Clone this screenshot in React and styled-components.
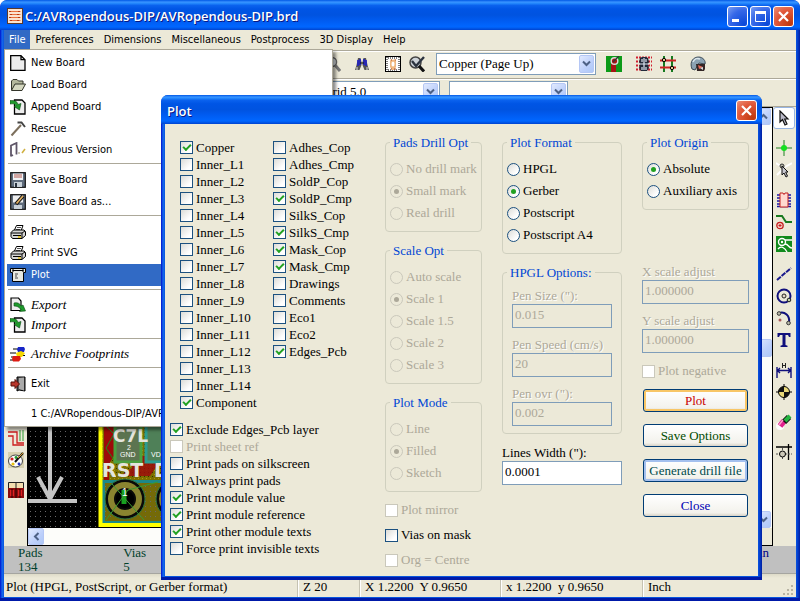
import React from "react";
import styled, { createGlobalStyle, css } from "styled-components";

const serif = '"Liberation Serif", "Times New Roman", serif';
const ui = '"DejaVu Sans Condensed", Tahoma, "DejaVu Sans", sans-serif';
const face = "#ece9d8";

const Global = createGlobalStyle`
  *, *::before, *::after { box-sizing: border-box; }
  body { margin: 0; background: #fff; font: 13px/16px ${serif}; color: #000; }
  button, input, select { font: inherit; color: inherit; margin: 0; }
`;

/* ---------- window frame ---------- */

const frame = css`
  display: flex;
  flex-direction: column;
  padding: 0 4px 4px;
  background: linear-gradient(90deg, #0019cf 0, #0831d9 1px, #166aee 2px, #0855dd 4px, #0855dd calc(100% - 4px), #0546d8 calc(100% - 3px), #001ea0 100%);
  border-radius: 7px 7px 0 0;
  box-shadow: inset 0 -3px 0 #0019a8;
`;

const MainWindow = styled.div`
  ${frame}
  position: relative;
  min-height: 100vh;
  overflow: hidden;
`;

const Dialog = styled.section`
  ${frame}
  position: absolute;
  left: 161px;
  right: 38px;
  top: 95px;
`;

const TitleBar = styled.header`
  display: flex;
  align-items: center;
  gap: 2px;
  height: ${(p) => (p.$small ? "29px" : "30px")};
  margin: 0 -4px;
  padding: 2px ${(p) => (p.$small ? "5px" : "6px")} 0 ${(p) => (p.$small ? "6px" : "7px")};
  border-radius: 7px 7px 0 0;
  background: linear-gradient(180deg, #0058e6 0, #3a93ff 7%, #288eff 10%, #0a62ee 18%, #0055e5 30%, #0053e0 50%, #005bf0 68%, #0066ff 88%, #0060f5 92%, #0043cf 100%);
`;

const Title = styled.h1`
  flex: 1;
  margin: 0;
  font: 600 13px/18px "Open Sans", "Noto Sans", sans-serif;
  color: #fff;
  text-shadow: 1px 1px 0 #0a1883;
  white-space: nowrap;
`;

const WinButton = styled.button`
  display: grid;
  place-items: center;
  width: 21px;
  height: 21px;
  padding: 0;
  border: 1px solid #fff;
  border-radius: 3px;
  background: ${(p) =>
    p.$close
      ? "radial-gradient(circle at 85% 90%, #c0380d, #e1583a 60%, #ec9078)"
      : "radial-gradient(circle at 85% 90%, #0a48d8, #3668e8 60%, #7c9ff2)"};
`;

const CloseGlyph = () => (
  <svg width="13" height="13" viewBox="0 0 13 13" aria-hidden="true">
    <path d="M2 2l9 9M11 2l-9 9" stroke="#fff" strokeWidth="2.2" />
  </svg>
);

/* ---------- menu bar and menu ---------- */

const MenuBar = styled.nav`
  display: flex;
  height: 20px;
  background: ${face};
  font: 11px/14px ${ui};
`;

const MenuTitle = styled.button`
  padding: 0 5px;
  border: 0;
  background: ${(p) => (p.$open ? "#316ac5" : "transparent")};
  color: ${(p) => (p.$open ? "#fff" : "#000")};
`;

const Menu = styled.div`
  position: absolute;
  left: 4px;
  top: 49px;
  width: 329px;
  padding: 2px;
  border: 1px solid #aca899;
  background: #fff;
  box-shadow: 3px 3px 3px rgba(0, 0, 0, 0.45);
  font: 11px/14px ${ui};
`;

const MenuItem = styled.button`
  display: flex;
  align-items: center;
  gap: 5px;
  width: 100%;
  height: ${(p) => p.$h || 22}px;
  padding: 0 3px;
  border: 0;
  text-align: left;
  background: ${(p) => (p.$active ? "#316ac5" : "transparent")};
  color: ${(p) => (p.$active ? "#fff" : "#000")};
  ${(p) => p.$italic && css`font: italic 13px/16px ${serif};`}
`;

const IconSlot = styled.span`
  display: flex;
  flex: none;
  width: 16px;
  height: 16px;
`;

const MenuRule = styled.hr`
  height: 1px;
  margin: 3px 1px 5px;
  border: 0;
  background: #aca899;
`;

/* ---------- toolbars ---------- */

const Toolbar = styled.div`
  display: flex;
  align-items: center;
  height: 28px;
  padding: 0 0 2px ${(p) => p.$start}px;
  gap: 9px;
  background: ${face};
  border-top: 1px solid #aca899;
  box-shadow: inset 0 1px 0 #fff;
`;

const ToolGroup = styled.div`
  display: flex;
  align-items: center;
  gap: 8px;
  margin-right: ${(p) => p.$after || 0}px;
`;

const SelectWrap = styled.div`
  position: relative;
  width: ${(p) => p.$w}px;
  height: 22px;
  border: 1px solid #7f9db9;
  background: #fff;
  select {
    width: 100%;
    height: 100%;
    padding: 0 20px 0 2px;
    border: 0;
    appearance: none;
    background: transparent;
  }
`;

const arrowFace = css`
  display: grid;
  place-items: center;
  border: 1px solid #b5c7f5;
  border-radius: 2px;
  background: linear-gradient(135deg, #e1eafe, #bdd0fb 60%, #aec8f7);
`;

const SelectArrow = styled.span`
  ${arrowFace}
  position: absolute;
  top: 1px;
  right: 1px;
  bottom: 1px;
  width: 15px;
  pointer-events: none;
`;

const turns = { down: 0, left: 90, up: 180 };
const Chevron = ({ dir = "down" }) => (
  <svg width="9" height="9" viewBox="0 0 9 9" aria-hidden="true">
    <path d="M1 2.5L4.500 6L8 2.500" fill="none" stroke="#4d6185" strokeWidth="2" transform={`rotate(${turns[dir]} 4.5 4.5)`} />
  </svg>
);

const Combo = ({ label, value, w }) => (
  <SelectWrap $w={w}>
    <select aria-label={label} defaultValue={value}>
      <option>{value}</option>
    </select>
    <SelectArrow><Chevron /></SelectArrow>
  </SelectWrap>
);

/* ---------- work area ---------- */

const WorkArea = styled.div`
  display: flex;
  flex: 1;
  background: ${face};
  border-top: 1px solid #aca899;
`;

const LeftTools = styled.div`
  display: flex;
  flex-direction: column;
  justify-content: flex-end;
  align-items: center;
  gap: 6px;
  width: 23px;
  padding-bottom: 49px;
`;

const RightTools = styled.div`
  display: flex;
  flex-direction: column;
  width: 23px;
`;

const IconButton = styled.button`
  display: grid;
  place-items: center;
  width: ${(p) => p.$w || 22}px;
  height: ${(p) => p.$h || 22}px;
  margin-top: ${(p) => (p.$gap ? 8 : 0)}px;
  padding: 0;
  border: 1px solid ${(p) => (p.$on ? "#98b5e2" : "transparent")};
  border-radius: 3px;
  background: ${(p) => (p.$on ? "#fff" : "transparent")};
`;

const Board = styled.main`
  display: grid;
  grid-template: minmax(0, 1fr) 17px / minmax(0, 1fr) 17px;
  flex: 1;
  border: 1px solid #000;
  background: ${face};
`;

const Canvas = styled.div`
  display: flex;
  align-items: flex-end;
  overflow: hidden;
  background: #000;
`;

const ScrollTrack = styled.div`
  display: flex;
  flex-direction: ${(p) => (p.$vertical ? "column" : "row")};
  justify-content: space-between;
  background: #fdfdfa;
`;

const ScrollButton = styled.button`
  ${arrowFace}
  width: 16px;
  height: 17px;
  padding: 0;
`;

const ScrollThumb = styled.div`
  ${arrowFace}
  height: 18px;
  margin-top: 60px;
`;

const InfoPanel = styled.dl`
  display: grid;
  grid-template-columns: 105fr 500fr 145fr 27fr;
  margin: 0;
  height: 28px;
  padding-left: 14px;
  background: #c0c0c0;
  color: #00402c;
  border-bottom: 1px solid #a5a5a0;
  line-height: 14px;
  dt, dd { margin: 0; }
`;

const InfoCell = styled.div`
  text-align: ${(p) => (p.$end ? "right" : "left")};
  color: ${(p) => (p.$end ? "#000084" : "inherit")};
`;

const StatusBar = styled.footer`
  display: grid;
  grid-template-columns: 293fr 62fr 141fr 142fr 154fr;
  height: 23px;
  background: linear-gradient(180deg, #dedbc8, ${face} 4px, ${face});
`;

const StatusCell = styled.span`
  display: flex;
  align-items: center;
  justify-content: space-between;
  padding: 2px 0 0 ${(p) => (p.$first ? 2 : 5)}px;
  border-left: ${(p) => (p.$first ? 0 : 1)}px solid #c5c2b2;
  box-shadow: ${(p) => (p.$first ? "none" : "inset 1px 0 0 #fff")};
  white-space: pre;
`;

const Grip = styled.svg`
  align-self: flex-end;
`;

/* ---------- dialog parts ---------- */

const DialogBody = styled.form`
  display: grid;
  grid-template-columns: minmax(0, 195fr) minmax(0, 97fr) minmax(0, 120fr) minmax(0, 107fr);
  column-gap: 20px;
  padding: 11px 9px 9px 5px;
  background: ${face};
`;

const Stack = styled.div`
  display: flex;
  flex-direction: column;
  gap: ${(p) => p.$gap || 11}px;
`;

const LayerColumns = styled.div`
  display: grid;
  grid-template-columns: 93fr 92fr;
  align-content: start;
  padding: 4px 0 0 10px;
`;

const Choice = styled.label`
  display: flex;
  align-items: center;
  gap: 3px;
  height: ${(p) => p.$h}px;
  white-space: nowrap;
  color: ${(p) => (p.$off ? "#aca899" : "#000")};
`;

const Tick = styled.input`
  flex: none;
  display: grid;
  place-items: center;
  appearance: none;
  width: 13px;
  height: 13px;
  border: 1px solid #1c5180;
  background: linear-gradient(135deg, #dcdcd7, #fff 75%);
  &:checked::after {
    content: "";
    width: 8px;
    height: 5px;
    margin-top: -2px;
    border: solid #21a121;
    border-width: 0 0 2px 2px;
    transform: rotate(-45deg);
  }
  &:disabled { border-color: #cac8bb; background: #fff; }
`;

const Dot = styled.input`
  flex: none;
  display: grid;
  place-items: center;
  appearance: none;
  width: 13px;
  height: 13px;
  border: 1px solid #1c5180;
  border-radius: 50%;
  background: linear-gradient(135deg, #dcdcd7, #fff 75%);
  &:checked::after {
    content: "";
    width: 5px;
    height: 5px;
    border-radius: 50%;
    background: #21a121;
  }
  &:disabled { border-color: #cac8bb; background: ${face}; }
  &:disabled:checked::after { background: #aca899; }
`;

const Group = styled.fieldset`
  min-width: 0;
  margin: 0;
  padding: 8px ${(p) => p.$side || 4}px 7px;
  border: 1px solid #d0d0bf;
  border-radius: 4px;
  legend {
    height: 15px;
    margin-left: ${(p) => (p.$side ? -5 : 0)}px;
    padding: 0 3px;
    line-height: 15px;
    color: #0046d5;
    white-space: nowrap;
  }
`;

const Fields = styled.div`
  display: flex;
  flex-direction: column;
  gap: 9px;
  margin-top: ${(p) => p.$before || 0}px;
`;

const Field = styled.label`
  display: block;
  white-space: nowrap;
  color: ${(p) => (p.$off ? "#aca899" : "#000")};
  text-shadow: ${(p) => (p.$off ? "1px 1px 0 #fff" : "none")};
  input {
    display: block;
    width: 100%;
    height: 24px;
    padding: 0 2px 2px;
    border: 1px solid #7f9db9;
    background: #fff;
  }
  input:disabled { background: ${face}; color: #aca899; }
`;

const edges = { plain: "transparent", hot: "#f8c666", focus: "#a4c0ee" };
const PushButton = styled.button`
  height: 23px;
  padding: 0;
  border: 1px solid #003c74;
  border-radius: 3px;
  background: linear-gradient(180deg, #fff, #f3f2ec 85%, #d8d2c6);
  box-shadow: inset 0 0 0 2px ${(p) => edges[p.$edge || "plain"]};
  color: ${(p) => p.$ink};
  white-space: nowrap;
`;

const Buttons = styled.div`
  display: flex;
  flex-direction: column;
  gap: 12px;
  padding: 0 1px;
`;

/* ---------- icons ---------- */

const art = {
  app: (
    <>
      <rect x=".5" y=".5" width="15" height="15" fill="#fbe3cf" stroke="#5a3a2a" />
      <path d="M2.500 3.500h11M2.500 6.500h11M2.500 9.500h11M2.500 12.500h11" stroke="#e8703c" />
      <path d="M3 3v1M12 3v1M4 6v1M11 6v1M3 9v1M12 9v1M4 12v1M11 12v1" stroke="#b83a10" strokeWidth="2" />
    </>
  ),
  page: (
    <path d="M.7.7H11l4 4v10.600H.7zM11 .7v4h4" fill="#ededed" stroke="#000" strokeWidth="1.300" />
  ),
  folder: (
    <>
      <path d="M1.500 13V4l1.500-1.500h4L8.500 4H13v3" fill="#b4b89c" stroke="#33352a" />
      <path d="M1.500 13.500L5 7h10.500L12 13.500z" fill="#d5d8c0" stroke="#33352a" />
    </>
  ),
  append: (
    <>
      <path d="M4.500 1H12l3 3v11H4.500z" fill="#eee" stroke="#000" strokeWidth="1.300" />
      <path d="M0 1.500c4 0 7 0 8 4l3-1-1.500 6.500L4 7.500l2-1C4 4 2 5 0 5z" fill="#1e9a2c" stroke="#0a4a12" strokeWidth=".6" />
    </>
  ),
  hammer: (
    <>
      <path d="M1.500 14.500L11 4" stroke="#7c6f5c" strokeWidth="2" />
      <path d="M7.500 1.500l4 0L15 6" fill="none" stroke="#444" strokeWidth="2" />
    </>
  ),
  previous: (
    <>
      <path d="M1 14.500V3.500L6.500 1v11.500M1 14l2-1" fill="none" stroke="#5f5668" strokeWidth="1.800" />
      <path d="M12 11l3-4" stroke="#d0b040" strokeWidth="1.500" />
      <path d="M9 10v2" stroke="#9a9070" />
    </>
  ),
  save: (
    <>
      <rect x=".7" y=".7" width="14.600" height="14.600" fill="#5f6c7c" stroke="#111" strokeWidth="1.200" />
      <rect x="3" y="1.500" width="10" height="6.500" fill="#f2f4f6" />
      <path d="M4 3h8M4 5h8" stroke="#b35a50" />
      <rect x="4" y="10" width="8" height="5" fill="#c9d1d8" />
      <rect x="5" y="11" width="2" height="4" fill="#28323e" />
    </>
  ),
  saveAs: (
    <>
      <rect x=".7" y=".7" width="14.600" height="14.600" fill="#5f6c7c" stroke="#111" strokeWidth="1.200" />
      <rect x="3" y="1.500" width="10" height="7" fill="#eee" />
      <rect x="4" y="11" width="8" height="4" fill="#c9d1d8" />
      <path d="M6 10l7-8" stroke="#111" strokeWidth="3.500" />
      <path d="M6.500 9.500L13 2" stroke="#e2b264" strokeWidth="1.800" />
    </>
  ),
  printer: (
    <>
      <path d="M4 7l2.500-5.500H13L11 7" fill="#fff" stroke="#000" />
      <path d="M7 3.500h4M6 5.500h4" stroke="#555" />
      <path d="M1 8.500L3.500 6H14l1.500 1.500v4L12 14.500H2.500L1 12.500z" fill="#d6d6d6" stroke="#000" />
      <path d="M1 9h11l3-2M3 11.500h8M12 9v5" stroke="#000" fill="none" />
      <path d="M8 13h3" stroke="#e8c000" strokeWidth="1.300" />
    </>
  ),
  plotter: (
    <>
      <path d="M.5 1.500h15v4h-2v9h-11v-9h-2z" fill="#e8e8e0" stroke="#000" />
      <path d="M2.500 3.500h11M3 1v4M13 1v4" stroke="#000" />
      <path d="M5 7h3M5 9h2M5 11h3" stroke="#444" />
    </>
  ),
  exportDoc: (
    <>
      <path d="M1 1h7.500l2.500 3v9.500H1z" fill="#eee" stroke="#000" strokeWidth="1.200" />
      <path d="M4 6c4-1 6 1 7 3l2-1 2.500 6-6 .5 1.500-2C9 10 7 9 4 9z" fill="#1e9a2c" stroke="#0a4a12" strokeWidth=".6" />
    </>
  ),
  archive: (
    <>
      <path d="M3 3h5M0 7h6M1 11h4M8 9.500h7M0 14h4" stroke="#000" />
      <path d="M8 1h6l1 2-1 3H8L7 3.500z" fill="#1726c8" />
      <path d="M6 7l5-2 4 2-3 4H7z" fill="#f5d800" />
      <path d="M3 10h7l1 3-2 2.500H3L2 13z" fill="#dd1c12" />
    </>
  ),
  exit: (
    <>
      <path d="M7 1h8v14l-6-1-2 1z" fill="#555" stroke="#000" />
      <path d="M9 2l5-.5v13L9 13z" fill="#a9a9a9" />
      <path d="M1 6h4V3.500L9.500 8 5 12.500V10H1z" fill="#b8352a" stroke="#571009" />
    </>
  ),
  zoom: (
    <>
      <circle cx="7" cy="6" r="4.500" fill="#dfe6ea" stroke="#666" strokeWidth="1.500" />
      <path d="M10 9l5 6" stroke="#777" strokeWidth="3" />
    </>
  ),
  binoculars: (
    <>
      <path d="M4 2h2.500l1 4v3L5.500 14H1l1.500-5zM9.500 2H12l1.500 7 1.500 5h-4.500l-2-5V6z" fill="#555" />
      <path d="M4 4v6M12 4v6M6 3v6M10 3v6" stroke="#1a1ad0" strokeWidth="1.500" />
      <path d="M3 11v3M13 11v3" stroke="#ddd" />
      <path d="M6 7h4" stroke="#111" />
    </>
  ),
  netlist: (
    <>
      <rect x=".5" y=".5" width="15" height="15" fill="#fff" stroke="#000" />
      <path d="M2 1v14M14 1v14M3 2h10M3 14h10" stroke="#000" strokeDasharray="1 1" />
      <path d="M5 5l1-2 2 1 2-1 1 2v6l-2 3H7l-2-3z" fill="#efb880" />
      <ellipse cx="8" cy="8" rx="1.500" ry="2.500" fill="#fff" /><path d="M6 13h1M9 13h2M6 4h1M10 4h1" stroke="#b04a20" />
    </>
  ),
  drc: (
    <>
      <circle cx="6.500" cy="6.500" r="5.500" fill="#cdd3d8" stroke="#444" strokeWidth="1.500" />
      <path d="M3 5l4 5 8-9" fill="none" stroke="#2c3440" strokeWidth="2.400" />
      <path d="M10 10l5 5.500" stroke="#111" strokeWidth="3" />
    </>
  ),
  route: (
    <>
      <rect width="16" height="16" fill="#0c9a18" />
      <path d="M5 16V7h5v9z" fill="#a51414" />
      <circle cx="8.500" cy="5" r="4" fill="#ddd" /><circle cx="8.500" cy="5" r="2.600" fill="#a51414" />
      <path d="M7 6l6-6" stroke="#333" strokeWidth="1.200" />
    </>
  ),
  module: (
    <>
      <path d="M0 1.500h16M0 5.500h16M0 9.500h16M0 13.500h16" stroke="#d02030" strokeWidth="2" strokeDasharray="2 1" />
      <path d="M4 2l2-1h4l2 1 1 4-1 2 1 4-2 3H5l-2-3 1-4-1-2z" fill="#222a3a" />
      <path d="M8 2v12M3 8h10M6 3v3M10 3v3M6 11v3M10 11v3" stroke="#dfe6f4" strokeWidth="1.200" />
    </>
  ),
  tracks: (
    <>
      <path d="M4 0v16M12 0v16" stroke="#177a20" strokeWidth="2" />
      <path d="M0 4.500h16M0 11.500h16" stroke="#cc2222" strokeWidth="2" />
      <circle cx="4" cy="4" r="1.700" fill="#e8c890" stroke="#000" /><circle cx="12" cy="12" r="1.700" fill="#e8c890" stroke="#000" />
    </>
  ),
  helmet: (
    <>
      <path d="M2 13C-1 5 4 1 8.500 1S16 5 15 8L9 7 5 14z" fill="#8ba2b2" stroke="#3c4a56" />
      <path d="M6 8l9 0v5l-1 2H7z" fill="#332626" /><path d="M8 9l5 2-4 2z" fill="#e86a5a" />
      <path d="M10 12l3-1v3z" fill="#ddd" />
      <path d="M3 6c2-4 4-4 7-3" fill="none" stroke="#dbe6ec" strokeWidth="1.500" />
    </>
  ),
  arrow: (
    <path d="M4 1v11l2.500-2.500L9 15l2-1-2.300-5H12z" fill="#b9b9c8" stroke="#111" strokeWidth="1.200" />
  ),
  cross: (
    <>
      <path d="M8 0v16M0 8h16" stroke="#208020" />
      <circle cx="8" cy="8" r="3" fill="#14e020" />
    </>
  ),
  pick: (
    <>
      <path d="M0 1l6 4M16 1L9 5M1 13l5-5" stroke="#fff" strokeWidth="2" />
      <circle cx="6" cy="4" r="2" fill="#b8b8a8" stroke="#333" />
      <path d="M6 4v9l2-2 2 4 1.500-.8L9.700 10H12z" fill="#c8c8d0" stroke="#111" />
    </>
  ),
  chip: (
    <>
      <path d="M1 3h14M1 6h14M1 9h14M1 12h14M1 14.500h14" stroke="#1a1aa8" strokeWidth="1.500" />
      <path d="M4 1h3l1 1.500L9 1h3v14H4z" fill="#ffd9d0" stroke="#c42020" />
    </>
  ),
  addTrack: (
    <>
      <path d="M0 2h6l4 6h6" fill="none" stroke="#187a20" strokeWidth="2" />
      <circle cx="4" cy="11.500" r="3.200" fill="#f4c9c0" stroke="#c42020" strokeWidth="1.300" /><path d="M4 10v3M2.500 11.500h3" stroke="#c42020" />
    </>
  ),
  zone: (
    <>
      <rect width="16" height="16" fill="#118a1c" />
      <circle cx="6" cy="6" r="3.500" fill="none" stroke="#fff" strokeWidth="1.400" /><circle cx="6" cy="6" r="1.200" fill="#fff" />
      <path d="M9 4h7M9 8c4 0 3 4 7 4M2 13c3-4 7-1 9 3" fill="none" stroke="#fff" strokeWidth="1.300" />
    </>
  ),
  line: <path d="M1 14L15 2" stroke="#1a1a8c" strokeWidth="2" strokeDasharray="5 1" />,
  circle: (
    <>
      <circle cx="8" cy="8" r="6.500" fill="none" stroke="#10107c" strokeWidth="2" />
      <circle cx="8" cy="8" r="2" fill="#e6d8c8" stroke="#222" /><circle cx="13" cy="12" r="1.800" fill="#bca" stroke="#222" />
    </>
  ),
  arc: (
    <>
      <path d="M3 3c6-2 11 3 10 9" fill="none" stroke="#10107c" strokeWidth="2" />
      <circle cx="3" cy="3.500" r="1.800" fill="#bba" stroke="#333" /><circle cx="4" cy="10" r="1.500" fill="#a55" /><circle cx="12.500" cy="13" r="1.800" fill="#bba" stroke="#333" />
    </>
  ),
  letter: <path d="M1.500 1h13v4h-1.500L12 3H9.500v10l2 .8V15h-7v-1.200l2-.8V3H4L3 5H1.500z" fill="#10107c" />,
  dimension: (
    <>
      <path d="M1 5v11M15 5v11M1 8.500h14M4 6L1.500 8.500 4 11M12 6l2.500 2.500L12 11" fill="none" stroke="#10107c" strokeWidth="1.400" />
      <path d="M6.500 1v5M9.500 1v5M6 3.500h4" stroke="#222" />
    </>
  ),
  target: (
    <>
      <path d="M8 0v16M0 8h16" stroke="#000" />
      <circle cx="8" cy="8" r="5.500" fill="#e9d878" stroke="#000" />
      <path d="M8 8V2.500A5.500 5.500 0 0 0 2.500 8zM8 8v5.500A5.500 5.500 0 0 0 13.500 8z" fill="#111" />
    </>
  ),
  eraser: (
    <>
      <circle cx="4" cy="12" r="4" fill="#fff" />
      <path d="M4 12l4-5" stroke="#e0208c" strokeWidth="6" />
      <path d="M8 8l5-5" stroke="#111" strokeWidth="6" /><path d="M9 7l5-5" stroke="#25b440" strokeWidth="4" />
      <path d="M3 11l4-5" stroke="#f8a0cc" strokeWidth="1.500" />
    </>
  ),
  offset: (
    <>
      <path d="M0 3h16M12.500 0v16" stroke="#000" strokeWidth="1.300" />
      <path d="M0 10h16M6.500 4v12" stroke="#555" strokeDasharray="2 1" />
      <circle cx="6.500" cy="10" r="3" fill="#ccc8b8" stroke="#000" />
    </>
  ),
  nets: (
    <>
      <path d="M0 2h9v11h7M0 6h5v9h11" fill="none" stroke="#cc1c1c" strokeWidth="1.300" />
      <path d="M12 0v11M15 0v11" stroke="#2a9a30" />
    </>
  ),
  palette: (
    <>
      <rect width="16" height="16" fill="#d8d2b0" />
      <ellipse cx="7.500" cy="9" rx="7" ry="6" fill="#fff" stroke="#444" />
      <circle cx="4" cy="7" r="1.600" fill="#d02020" /><circle cx="5" cy="12" r="1.600" fill="#e8c010" /><circle cx="8" cy="5.500" r="1.400" fill="#20a030" /><circle cx="11" cy="12" r="1.400" fill="#2030c0" />
      <path d="M7 10l8-9" stroke="#111" strokeWidth="2" /><path d="M10 6l5-5" stroke="#e0a030" />
    </>
  ),
  contrast: (
    <>
      <path d="M.5 7V.5h15V7M8 0v7" fill="#f4dfb0" stroke="#222" />
      <rect y="6" width="16" height="10" fill="#8c0c0c" />
      <path d="M2 8h4v6H2zM10 8h4v6h-4z" fill="#e02020" /><path d="M4 7v9M12 7v9M8 6v10" stroke="#200" />
    </>
  ),
};

const Icon = ({ name }) => (
  <svg width="16" height="16" viewBox="0 0 16 16" fill="none" aria-hidden="true">{art[name]}</svg>
);

const BoardArt = () => (
  <svg width="134" height="104" viewBox="0 0 134 104" role="img" aria-label="Board layout">
    <defs>
      <pattern id="grid" width="5" height="5" patternUnits="userSpaceOnUse">
        <rect x="2" y="2" width="1" height="1" fill="#6a6a6a" />
      </pattern>
      <pattern id="hatch" width="4" height="4" patternUnits="userSpaceOnUse">
        <rect width="4" height="4" fill="#7c7000" />
        <rect width="1" height="1" fill="#2c3a00" /><rect x="2" y="2" width="1" height="1" fill="#a89a10" />
      </pattern>
    </defs>
    <rect width="134" height="104" fill="#000" />
    <rect width="134" height="104" fill="url(#grid)" />
    <g stroke="#c4c4c4" strokeWidth="4" fill="none">
      <path d="M22 0v76M10 53l12 22 12-22M0 77h49" />
    </g>
    <rect x="72" y="-10" width="90" height="111" fill="url(#hatch)" />
    <path d="M78 0h9v30l-6 10v16h-5V0z" fill="#9c0a0a" />
    <path d="M92 52h30l8-12v-8h-26v12z" fill="#9c0a0a" opacity=".85" />
    <path d="M76 0l10 10-8 14 8 12" stroke="#1c8a1c" fill="none" />
    <rect x="87" y="-8" width="26" height="46" fill="#5c7450" stroke="#4aa040" strokeWidth="3" />
    <rect x="118" y="-8" width="26" height="46" fill="#4f8058" stroke="#2c9c90" strokeWidth="3" />
    <rect x="75.500" y="57.500" width="62" height="41" fill="#746a08" stroke="#1c8888" strokeWidth="3" />
    <rect x="77" y="60" width="60" height="37" fill="url(#grid)" />
    {[97, 148].map((cx) => (
      <g key={cx}>
        <circle cx={cx} cy="75" r="20" fill="#0a0a08" stroke="#2f7a44" />
        <circle cx={cx} cy="75" r="14" fill="none" stroke="#8a8430" strokeWidth="6" />
        <circle cx={cx} cy="75" r="9" fill="#000" />
        <path d={`M${cx - 1} 66v14`} stroke="#18a020" strokeWidth="5" />
      </g>
    ))}
    <path d="M78 96l22-30 30-8M84 60l32 36" stroke="#3a9a30" fill="none" />
    <path d="M72.500 0v101H134" fill="none" stroke="#ffff00" strokeWidth="4" />
    <g fill="#e4e4dc" fontFamily='"DejaVu Sans", sans-serif' fontWeight="bold">
      <text x="85" y="18" fontSize="17">C7L</text>
      <text x="74" y="53" fontSize="19">RST</text>
      <text x="126" y="53" fontSize="19">D</text>
    </g>
    <g fill="#fff" fontFamily='"Liberation Sans", sans-serif'>
      <text x="99" y="26" fontSize="7">2</text>
      <text x="92" y="33" fontSize="7">GND</text>
      <text x="123" y="33" fontSize="7">VD</text>
      <text x="94" y="72" fontSize="10">1</text>
    </g>
  </svg>
);

/* ---------- data ---------- */

const menuItems = [
  ["New Board", "page"], ["Load Board", "folder"], ["Append Board", "append"],
  ["Rescue", "hammer", 21], ["Previous Version", "previous", 21], null,
  ["Save Board", "save"], ["Save Board as...", "saveAs", 21], null,
  ["Print", "printer", 21], ["Print SVG", "printer"], ["Plot", "plotter"], null,
  ["Export", "exportDoc", 20, true], ["Import", "append", 20, true], null,
  ["Archive Footprints", "archive", 20, true], null,
  ["Exit", "exit"], null,
  ["1 C:/AVRopendous-DIP/AVRopendous-DIP.brd", null, 20],
];

const copperLayers = ["Copper", ...Array.from({ length: 14 }, (_, i) => `Inner_L${i + 1}`), "Component"];
const techLayers = ["Adhes_Cop", "Adhes_Cmp", "SoldP_Cop", "SoldP_Cmp", "SilkS_Cop", "SilkS_Cmp", "Mask_Cop", "Mask_Cmp", "Drawings", "Comments", "Eco1", "Eco2", "Edges_Pcb"];
const selected = new Set(["Copper", "Component", "SoldP_Cmp", "SilkS_Cmp", "Mask_Cop", "Mask_Cmp", "Edges_Pcb"]);

const options = [
  ["Exclude Edges_Pcb layer", true], ["Print sheet ref", false, true], ["Print pads on silkscreen"],
  ["Always print pads"], ["Print module value", true], ["Print module reference", true],
  ["Print other module texts", true], ["Force print invisible texts"],
];

const rightTools = [
  ["Select", "arrow"], ["Highlight net", "cross", 1], ["Local ratsnest", "pick"], ["Add module", "chip", 1],
  ["Add track", "addTrack"], ["Add zone", "zone"], ["Add line", "line", 1], ["Add circle", "circle"],
  ["Add arc", "arc"], ["Add text", "letter"], ["Add dimension", "dimension", 1], ["Add target", "target"],
  ["Delete", "eraser", 1], ["Offset", "offset", 1],
];

const Check = ({ label, on, off, h = 17 }) => (
  <Choice $h={h} $off={off}>
    <Tick type="checkbox" defaultChecked={on} disabled={off} />
    {label}
  </Choice>
);

const RadioGroup = ({ title, items, value, off }) => (
  <Group>
    <legend>{title}</legend>
    {items.map((item) => (
      <Choice key={item} $h={22} $off={off}>
        <Dot type="radio" name={title} defaultChecked={item === value} disabled={off} />
        {item}
      </Choice>
    ))}
  </Group>
);

const TextField = ({ label, value, off }) => (
  <Field $off={off}>
    {label}
    <input type="text" defaultValue={value} disabled={off} />
  </Field>
);

const Tool = ({ label, icon }) => (
  <IconButton type="button" aria-label={label} $w={16}><Icon name={icon} /></IconButton>
);

export default function App() {
  return (
    <>
      <Global />
      <MainWindow>
        <TitleBar>
          <Icon name="app" />
          <Title>C:/AVRopendous-DIP/AVRopendous-DIP.brd</Title>
          <WinButton type="button" aria-label="Minimize">
            <svg width="13" height="13" viewBox="0 0 13 13"><path d="M1 10.500h7" stroke="#fff" strokeWidth="3" /></svg>
          </WinButton>
          <WinButton type="button" aria-label="Maximize">
            <svg width="13" height="13" viewBox="0 0 13 13"><path d="M1.500 2v9.500h10V2M1 2.500h11" fill="none" stroke="#fff" /><path d="M1 2.500h11" stroke="#fff" strokeWidth="3" /></svg>
          </WinButton>
          <WinButton type="button" aria-label="Close window" $close><CloseGlyph /></WinButton>
        </TitleBar>

        <MenuBar>
          {["File", "Preferences", "Dimensions", "Miscellaneous", "Postprocess", "3D Display", "Help"].map((name) => (
            <MenuTitle key={name} type="button" $open={name === "File"}>{name}</MenuTitle>
          ))}
        </MenuBar>

        <Toolbar $start={320}>
          <ToolGroup $after={4}><Tool label="Zoom" icon="zoom" /></ToolGroup>
          <ToolGroup $after={6}><Tool label="Find" icon="binoculars" /></ToolGroup>
          <ToolGroup $after={3}>
            <Tool label="Read netlist" icon="netlist" />
            <Tool label="Design rules check" icon="drc" />
          </ToolGroup>
          <Combo label="Active layer" value="Copper (Page Up)" w={160} />
          <ToolGroup $after={5}><Tool label="Track mode" icon="route" /></ToolGroup>
          <ToolGroup $after={5}>
            <Tool label="Module mode" icon="module" />
            <Tool label="Autoroute" icon="tracks" />
          </ToolGroup>
          <Tool label="Web router" icon="helmet" />
        </Toolbar>
        <Toolbar $start={316}>
          <Combo label="Grid" value="Grid 5.0" w={120} />
          <Combo label="Zoom level" value="" w={119} />
        </Toolbar>

        <WorkArea>
          <LeftTools>
            <IconButton type="button" aria-label="Show ratsnest" $h={16}><Icon name="nets" /></IconButton>
            <IconButton type="button" aria-label="Colours" $h={16}><Icon name="palette" /></IconButton>
            <IconButton type="button" aria-label="High contrast" $h={16} $gap><Icon name="contrast" /></IconButton>
          </LeftTools>
          <Board>
            <Canvas><BoardArt /></Canvas>
            <ScrollTrack $vertical>
              <ScrollButton type="button" aria-label="Scroll up"><Chevron dir="up" /></ScrollButton>
              <ScrollThumb />
              <ScrollButton type="button" aria-label="Scroll down"><Chevron /></ScrollButton>
            </ScrollTrack>
            <ScrollTrack>
              <ScrollButton type="button" aria-label="Scroll left"><Chevron dir="left" /></ScrollButton>
            </ScrollTrack>
          </Board>
          <RightTools>
            {rightTools.map(([label, icon, gap]) => (
              <IconButton key={label} type="button" aria-label={label} $gap={gap} $on={icon === "arrow"}>
                <Icon name={icon} />
              </IconButton>
            ))}
          </RightTools>
        </WorkArea>

        <InfoPanel>
          <InfoCell><dt>Pads</dt><dd>134</dd></InfoCell>
          <InfoCell><dt>Vias</dt><dd>5</dd></InfoCell>
          <InfoCell $end><dt>NoConn</dt></InfoCell>
        </InfoPanel>
        <StatusBar>
          <StatusCell $first>Plot (HPGL, PostScript, or Gerber format)</StatusCell>
          <StatusCell>Z 20</StatusCell>
          <StatusCell>{"X 1.2200  Y 0.9650"}</StatusCell>
          <StatusCell>{"x 1.2200  y 0.9650"}</StatusCell>
          <StatusCell>
            Inch
            <Grip width="13" height="13" viewBox="0 0 13 13" aria-hidden="true">
              <path d="M8 1h2v2H8zM8 5h2v2H8zM4 5h2v2H4zM8 9h2v2H8zM4 9h2v2H4zM0 9h2v2H0z" fill="#b8b4a3" />
            </Grip>
          </StatusCell>
        </StatusBar>

        <Menu role="menu">
          {menuItems.map((item, i) =>
            item ? (
              <MenuItem key={i} type="button" role="menuitem" $h={item[2]} $italic={item[3]} $active={item[0] === "Plot"}>
                <IconSlot>{item[1] && <Icon name={item[1]} />}</IconSlot>
                {item[0]}
              </MenuItem>
            ) : (
              <MenuRule key={i} />
            )
          )}
        </Menu>

        <Dialog role="dialog" aria-label="Plot">
          <TitleBar $small>
            <Title as="h2">Plot</Title>
            <WinButton type="button" aria-label="Close dialog" $close><CloseGlyph /></WinButton>
          </TitleBar>
          <DialogBody>
            <Stack $gap={10}>
              <LayerColumns>
                <div>{copperLayers.map((name) => <Check key={name} label={name} on={selected.has(name)} />)}</div>
                <div>{techLayers.map((name) => <Check key={name} label={name} on={selected.has(name)} />)}</div>
              </LayerColumns>
              <div>
                {options.map(([label, on, off]) => <Check key={label} label={label} on={on} off={off} />)}
              </div>
            </Stack>

            <Stack>
              <RadioGroup title="Pads Drill Opt" items={["No drill mark", "Small mark", "Real drill"]} value="Small mark" off />
              <RadioGroup title="Scale Opt" items={["Auto scale", "Scale 1", "Scale 1.5", "Scale 2", "Scale 3"]} value="Scale 1" off />
              <RadioGroup title="Plot Mode" items={["Line", "Filled", "Sketch"]} value="Filled" off />
              <Check label="Plot mirror" h={14} off />
              <Check label="Vias on mask" h={14} />
              <Check label="Org = Centre" h={14} off />
            </Stack>

            <Stack>
              <RadioGroup title="Plot Format" items={["HPGL", "Gerber", "Postscript", "Postscript A4"]} value="Gerber" />
              <Group $side={9}>
                <legend>HPGL Options:</legend>
                <Fields>
                  <TextField label={'Pen Size ("):'} value="0.015" off />
                  <TextField label="Pen Speed (cm/s)" value="20" off />
                  <TextField label={'Pen ovr ("):'} value="0.002" off />
                </Fields>
              </Group>
              <TextField label={'Lines Width ("):'} value="0.0001" />
            </Stack>

            <Stack>
              <RadioGroup title="Plot Origin" items={["Absolute", "Auxiliary axis"]} value="Absolute" />
              <Fields $before={43}>
                <TextField label="X scale adjust" value="1.000000" off />
                <TextField label="Y scale adjust" value="1.000000" off />
              </Fields>
              <Check label="Plot negative" h={14} off />
              <Buttons>
                <PushButton type="button" $ink="#c80000" $edge="hot">Plot</PushButton>
                <PushButton type="button" $ink="#004b00">Save Options</PushButton>
                <PushButton type="button" $ink="#004b4b" $edge="focus">Generate drill file</PushButton>
                <PushButton type="button" $ink="#0000b4">Close</PushButton>
              </Buttons>
            </Stack>
          </DialogBody>
        </Dialog>
      </MainWindow>
    </>
  );
}
